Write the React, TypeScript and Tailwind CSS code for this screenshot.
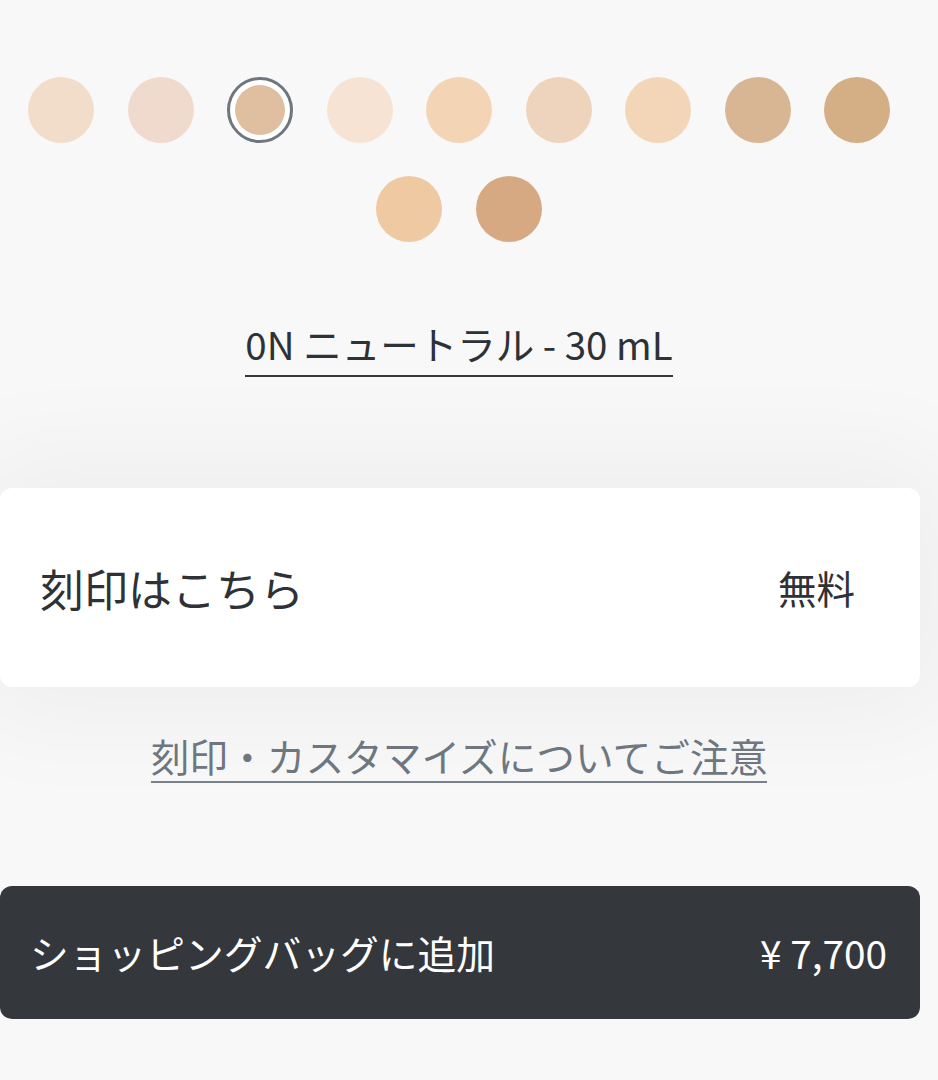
const shades = [
  "#f2dcca",
  "#f0d9cd",
  "#dfbfa0",
  "#f7e3d4",
  "#f3d5b6",
  "#eed3bd",
  "#f3d6b7",
  "#d9b693",
  "#d4ae84",
  "#efc9a2",
  "#d6a983",
];

const selected = 2;

export default function App() {
  return (
    <main
      className="min-h-[1080px] w-[938px] overflow-hidden bg-[#f8f8f9] text-[#2e3136]"
      style={{ fontFamily: '"Noto Sans CJK JP", "Noto Sans", sans-serif' }}
    >
      <div className="w-[918px]">
        <div className="flex flex-wrap justify-center gap-x-[33.5px] gap-y-[33px] px-[28px] pt-[77px]">
          {shades.map((c, i) =>
            i === selected ? (
              <button
                key={i}
                className="flex h-[66px] w-[66px] items-center justify-center rounded-full border-[3px] border-[#6f767d] bg-white"
              >
                <span className="h-[50px] w-[50px] rounded-full" style={{ backgroundColor: c }} />
              </button>
            ) : (
              <button key={i} className="h-[66px] w-[66px] rounded-full" style={{ backgroundColor: c }} />
            )
          )}
        </div>

        <div className="mt-[79px] flex justify-center">
          <span className="border-b-2 border-[#34373c] pb-[10px] text-[38.5px] leading-[44px]">
            0N ニュートラル - 30 mL
          </span>
        </div>
      </div>

      <section className="mt-[111px] w-[920px] rounded-xl bg-white shadow-[0_0_110px_30px_rgba(0,0,0,0.045)]">
        <div className="flex h-[199px] items-center justify-between pl-[40px] pr-[65px]">
          <span className="text-[44px]">刻印はこちら</span>
          <span className="text-[38.5px]">無料</span>
        </div>
      </section>

      <div className="mt-[44px] flex w-[918px] justify-center">
        <a className="border-b-2 border-[#78808a] pb-[2px] text-[38.7px] leading-[48px] text-[#6e767f]">
          刻印・カスタマイズについてご注意
        </a>
      </div>

      <button className="mt-[103px] flex h-[133px] w-[920px] items-center justify-between rounded-xl bg-[#34373c] pl-[30px] pr-[33px] text-white">
        <span className="text-[38.75px]">ショッピングバッグに追加</span>
        <span className="text-[38.75px]">¥ 7,700</span>
      </button>
    </main>
  );
}
